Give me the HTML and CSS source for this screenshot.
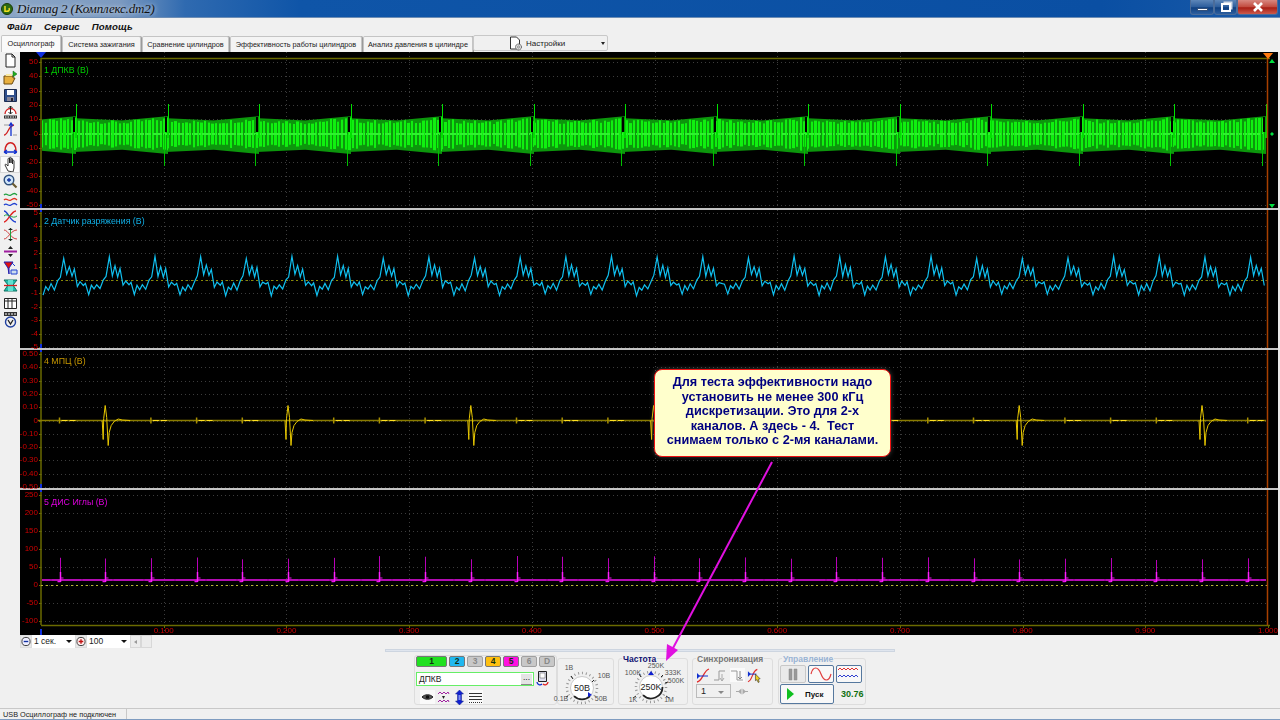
FILE: index.html
```html
<!DOCTYPE html>
<html>
    <head>
        <title>Diamag 2</title>
        <meta charset="utf-8">
        <link rel="stylesheet" href="styles.css">
    </head>

    <body>
        <div id="titlebar">
            <svg class="app_icon" width="12" height="12" viewBox="0 0 12 12">
                <circle cx="6" cy="6" r="5.5" fill="#2c6b12" stroke="#1b3a0a"/>
                <path d="M4 3v6M4 8c4 1 5-1 4-3" fill="none" stroke="#f0e020" stroke-width="1.5"/>
            </svg>
            <span class="app_title">Diamag 2 (Комплекс.dm2)</span>
            <div class="win_buttons">
                <div class="win_btn win_min"><span></span></div>
                <div class="win_btn win_max"><span></span></div>
                <div class="win_btn win_close">
                    <svg width="14" height="12" viewBox="0 0 14 12"><path d="M3 2l8 8M11 2l-8 8" stroke="#fff" stroke-width="2.6"/></svg>
                </div>
            </div>
        </div>

        <div id="menubar">
            <span class="menu_item">Файл</span>
            <span class="menu_item">Сервис</span>
            <span class="menu_item">Помощь</span>
        </div>

        <div id="tabbar">
            <div class="tab tab_active tab1">Осциллограф</div>
            <div class="tab tab2">Система зажигания</div>
            <div class="tab tab3">Сравнение цилиндров</div>
            <div class="tab tab4">Эффективность работы цилиндров</div>
            <div class="tab tab5">Анализ давления в цилиндре</div>
            <div class="settings">
                <svg width="14" height="15" viewBox="0 0 14 15">
                    <path d="M1.5 1h6l3 3v9h-9z" fill="#fff" stroke="#333"/>
                    <circle cx="9.5" cy="11" r="3" fill="#ddd" stroke="#555" stroke-dasharray="1.5 .6"/>
                    <circle cx="9.5" cy="11" r="1" fill="#fff" stroke="#555" stroke-width=".6"/>
                </svg>
                <span class="settings_text">Настройки</span>
                <span class="settings_arrow"></span>
            </div>
        </div>

        <div id="main">
            <div id="toolbar">
                <div class="tool"><svg width="15" height="15" viewBox="0 0 15 15"><path d="M3 1h6l3 3v10H3z" fill="#fff" stroke="#222"/><path d="M9 1v3h3" fill="none" stroke="#222"/></svg></div>
                <div class="tool"><svg width="15" height="15" viewBox="0 0 15 15"><path d="M1 6h9v2h2l-3 6H1z" fill="#e8b040" stroke="#6a4a10"/><path d="M10 1l4 3-4 3z" fill="#20b020" stroke="#106010" stroke-width=".5"/><path d="M3 4h6v2H3z" fill="#f8e8a0"/></svg></div>
                <div class="tool"><svg width="15" height="15" viewBox="0 0 15 15"><path d="M1.500 1.500h12v12h-12z" fill="#30508c" stroke="#1c2c50"/><path d="M4 2h7v5H4z" fill="#fff"/><path d="M4 9h7v4H4z" fill="#889"/><path d="M8 10h2v3H8z" fill="#223"/></svg></div>
                <div class="tool"><svg width="15" height="15" viewBox="0 0 15 15"><path d="M2 9a5.500 5.500 0 1 1 11 0" fill="#fff" stroke="#d02020" stroke-width="1.300"/><path d="M7.500 1v8M5.500 3l2-2 2 2M5.500 7l2 2 2-2" fill="none" stroke="#222"/><path d="M1 10.500h13v3H1z" fill="#333"/><path d="M2 12h11" stroke="#fff" stroke-dasharray="1.500 1"/></svg></div>
                <div class="tool"><svg width="15" height="15" viewBox="0 0 15 15"><path d="M1 13c4 0 4-9 10-10" fill="none" stroke="#d02020" stroke-width="1.300"/><path d="M8 1v13M6 4l2-3 2 3" fill="none" stroke="#1030d0" stroke-width="1.300"/><path d="M1 3h5M10 13h4" stroke="#999"/></svg></div>
                <div class="tool"><svg width="15" height="15" viewBox="0 0 15 15"><path d="M2 12C2 1 13 1 13 12" fill="none" stroke="#d02020" stroke-width="1.500"/><path d="M1 13h13M1 13l3-2M1 13l3 2M14 13l-3-2M14 13l-3 2" fill="none" stroke="#1030d0" stroke-width="1.300"/></svg></div>
                <div class="tool tool_active"><svg width="15" height="16" viewBox="0 0 15 16"><path d="M5 15L2 9c0-1 1-1 2 0l1 1V3c0-1 1.500-1 1.500 0v4-5c0-1 1.500-1 1.500 0v5-4c0-1 1.500-1 1.500 0v5-3c0-1 1.500-1 1.500 0v7l-1 4z" fill="#fff" stroke="#222" stroke-width=".9"/></svg></div>
                <div class="tool"><svg width="15" height="15" viewBox="0 0 15 15"><circle cx="6" cy="6" r="4.800" fill="#cfe4f8" stroke="#30507c" stroke-width="1.400"/><path d="M4 6h4M6 4v4" stroke="#1030a0" stroke-width="1.300"/><path d="M9.500 9.500l4 4" stroke="#6a5a30" stroke-width="2.200"/></svg></div>
                <div class="tool tool_gap"><svg width="15" height="16" viewBox="0 0 15 16"><path d="M1 3c3-3 4 2 7 0s4-2 6 0" fill="none" stroke="#20a040" stroke-width="1.300"/><path d="M1 8c3-3 4 2 7 0s4-2 6 0" fill="none" stroke="#e03020" stroke-width="1.300"/><path d="M1 13c3-3 4 2 7 0s4-2 6 0" fill="none" stroke="#2040d0" stroke-width="1.300"/></svg></div>
                <div class="tool"><svg width="15" height="15" viewBox="0 0 15 15"><path d="M1 2c4 0 6 11 12 11" fill="none" stroke="#2040d0" stroke-width="1.300"/><path d="M1 13C5 13 8 2 13 2" fill="none" stroke="#e02020" stroke-width="1.300"/><path d="M1 7c4-4 8 4 13 0" fill="none" stroke="#20a040"/></svg></div>
                <div class="tool"><svg width="15" height="15" viewBox="0 0 15 15"><path d="M1 12C5 12 8 3 14 3M1 3c4 0 7 9 13 9" fill="none" stroke="#d04040"/><path d="M7.500 1v13" stroke="#20a040"/><path d="M5 3l2.500-2L10 3zM5 12l2.500 2 2.500-2z" fill="#222"/></svg></div>
                <div class="tool"><svg width="15" height="15" viewBox="0 0 15 15"><path d="M5 5l2.500-3L10 5zM5 10l2.500 3L10 10z" fill="#222"/><path d="M1 7.500h13" stroke="#a020a0" stroke-width="2"/></svg></div>
                <div class="tool"><svg width="15" height="15" viewBox="0 0 15 15"><path d="M1 1h9L6 7v6L5 7z" fill="#e01010" stroke="#2020b0"/><path d="M8 9h6v4H8z" fill="#cde" stroke="#2040d0"/><path d="M9 2l3 3" stroke="#2040d0"/></svg></div>
                <div class="tool"><svg width="15" height="15" viewBox="0 0 15 15"><path d="M1 2h13l-4 5 4 6H1l4-6z" fill="#20c0b0" stroke="#107060"/><path d="M5 2h5v11H5z" fill="#60e0d0"/><path d="M1 7.500h13" stroke="#d02020" stroke-width="1.300"/></svg></div>
                <div class="tool"><svg width="15" height="15" viewBox="0 0 15 15"><path d="M1.500 2.500h12v10h-12z" fill="#fff" stroke="#222"/><path d="M1 5h13M5 3v10M9 3v10" stroke="#222"/></svg></div>
                <div class="tool"><svg width="15" height="16" viewBox="0 0 15 16"><path d="M1 0h13v4H1z" fill="#333"/><path d="M2 2h11" stroke="#fff" stroke-dasharray="2 1"/><circle cx="7.500" cy="10" r="5" fill="#f0f0f0" stroke="#2040a0" stroke-width="1.400"/><path d="M5 8l2.500 4L10 8" fill="none" stroke="#222" stroke-width="1.300"/></svg></div>
            </div>

            <div id="plots">
                <div class="plot plot1" data-plot="0"><canvas></canvas><span class="plot_name name1">1 ДПКВ (В)</span></div>
                <div class="plot plot2" data-plot="1"><canvas></canvas><span class="plot_name name2">2 Датчик разряжения (В)</span></div>
                <div class="plot plot3" data-plot="2"><canvas></canvas><span class="plot_name name3">4 МПЦ (В)</span></div>
                <div class="plot plot4" data-plot="3"><canvas></canvas><span class="plot_name name4">5 ДИС Иглы (В)</span></div>
            </div>
        </div>

        <div id="scrollrow">
            <div class="zoom_btn"><svg width="11" height="11" viewBox="0 0 11 11"><circle cx="5.500" cy="5.500" r="4.500" fill="#eef" stroke="#333"/><path d="M3 5.500h5" stroke="#1030a0" stroke-width="1.500"/></svg></div>
            <div class="combo combo_time">1 сек.<span class="combo_arrow"></span></div>
            <div class="zoom_btn"><svg width="11" height="11" viewBox="0 0 11 11"><circle cx="5.500" cy="5.500" r="4.500" fill="#fee" stroke="#333"/><path d="M3 5.500h5M5.500 3v5" stroke="#c01010" stroke-width="1.500"/></svg></div>
            <div class="combo combo_scale">100<span class="combo_arrow"></span></div>
            <div class="scroll_btn"><span class="scroll_left"></span></div>
            <div class="scroll_btn"></div>
        </div>

        <div id="splitter"><span></span></div>

        <div id="controls">
            <div class="group group_channels">
                <div class="channel_row">
                    <div class="chan chan_wide chan_green">1</div>
                    <div class="chan chan_cyan">2</div>
                    <div class="chan chan_off">3</div>
                    <div class="chan chan_orange">4</div>
                    <div class="chan chan_magenta">5</div>
                    <div class="chan chan_off">6</div>
                    <div class="chan chan_off">D</div>
                </div>
                <div class="input_row">
                    <div class="name_input">ДПКВ<span class="dots">...</span></div>
                    <svg width="13" height="15" viewBox="0 0 13 15"><path d="M2.500 .5h8v10h-8z" fill="#dde" stroke="#222"/><path d="M4 2h5v5H4z" fill="#fff" stroke="#555" stroke-width=".5"/><path d="M1 11a3 3 0 0 0 5 2" fill="none" stroke="#1030d0" stroke-width="1.300"/><path d="M12 11a3 3 0 0 1-5 2" fill="none" stroke="#e02020" stroke-width="1.300"/></svg>
                </div>
                <div class="icon_row">
                    <div class="small_icon icon_on"><svg width="13" height="13" viewBox="0 0 13 13"><path d="M1 6c3-3 8-3 11 0-3 3-8 3-11 0z" fill="#555" stroke="#222"/><circle cx="6.500" cy="6" r="1.800" fill="#111"/></svg></div>
                    <div class="small_icon"><svg width="13" height="13" viewBox="0 0 13 13"><path d="M1 3l2-2 2 2 2-2 2 2 2-2 1 2" fill="none" stroke="#a020a0"/><path d="M1 11l2-2 2 2 2-2 2 2 2-2 1 2" fill="none" stroke="#a020a0"/><path d="M5 5h3L6.500 8z" fill="#222"/></svg></div>
                    <div class="small_icon"><svg width="13" height="15" viewBox="0 0 13 15"><path d="M6.500 0l4 4H8.500v7h2l-4 4-4-4h2V4h-2z" fill="#1020d0" stroke="#102080" stroke-width=".5"/><path d="M5.500 5h2v5h-2z" fill="#8090f0"/></svg></div>
                    <div class="small_icon icon_on"><svg width="13" height="13" viewBox="0 0 13 13"><path d="M0 2.500h13M0 5.500h13M0 8.500h13" stroke="#333"/><path d="M0 11.500h13" stroke="#333" stroke-dasharray="1 1"/></svg></div>
                </div>
            </div>

            <div class="group group_volts">
                <svg class="knob" width="56" height="48" viewBox="0 0 56 48">
                    <circle cx="24" cy="32" r="15" fill="none" stroke="#999" stroke-width="2.500" stroke-dasharray="1 2.900"/>
                    <circle cx="24" cy="32" r="11.500" fill="#fff" stroke="#aaa" stroke-width=".6"/>
                    <path d="M16 40.200A11.500 11.500 0 0 0 32 40.200" fill="none" stroke="#222" stroke-width="1.800"/>
                    <path d="M30 36l4 3-4 2z" fill="#1020d0"/>
                    <path d="M13 20l2 3M36 24l-2 2M8 41l2-1" stroke="#222"/>
                    <text x="24" y="35" class="knob_value">50В</text>
                    <text x="11" y="14" class="knob_label">1В</text>
                    <text x="46" y="22" class="knob_label">10В</text>
                    <text x="3" y="45" class="knob_label">0.1В</text>
                    <text x="43" y="45" class="knob_label">50В</text>
                </svg>
            </div>

            <div class="group group_freq">
                <div class="group_title title_navy">Частота</div>
                <svg class="knob knob_freq" width="70" height="46" viewBox="0 0 70 46">
                    <circle cx="32" cy="29" r="15" fill="none" stroke="#999" stroke-width="2.500" stroke-dasharray="1 2.900"/>
                    <circle cx="32" cy="29" r="11.500" fill="#fff" stroke="#aaa" stroke-width=".6"/>
                    <path d="M24 37.200A11.500 11.500 0 0 0 43.500 29" fill="none" stroke="#222" stroke-width="1.800"/>
                    <path d="M32 13l3 4h-6z" fill="#1020d0"/>
                    <path d="M20 16l2 3M44 17l-2 2M49 24l-3 1M14 40l3-2M50 40l-3-2" stroke="#222"/>
                    <text x="32" y="32" class="knob_value">250K</text>
                    <text x="14" y="17" class="knob_label">100K</text>
                    <text x="37" y="10" class="knob_label">250K</text>
                    <text x="54" y="17" class="knob_label">333K</text>
                    <text x="57" y="25" class="knob_label">500K</text>
                    <text x="14" y="44" class="knob_label">1K</text>
                    <text x="50" y="44" class="knob_label">1M</text>
                </svg>
            </div>

            <div class="group group_sync">
                <div class="group_title title_grey">Синхронизация</div>
                <div class="sync_icons">
                    <div class="small_icon"><svg width="15" height="15" viewBox="0 0 15 15"><path d="M1 14C7 13 7 3 13 1" fill="none" stroke="#e03030" stroke-width="1.300"/><path d="M1 8h11" stroke="#1030d0"/><path d="M1 5v6l3-3z" fill="#1030d0"/></svg></div>
                    <div class="small_icon"><svg width="15" height="15" viewBox="0 0 15 15"><path d="M1 12h5V3h6" fill="none" stroke="#999"/><path d="M9 6v7M7 10l2 3 2-3" fill="none" stroke="#aaa"/></svg></div>
                    <div class="small_icon icon_on"><svg width="15" height="15" viewBox="0 0 15 15"><path d="M1 3h6v9h6" fill="none" stroke="#999"/><path d="M10 3v8M8 9l2 2 2-2" fill="none" stroke="#888"/></svg></div>
                    <div class="small_icon"><svg width="16" height="15" viewBox="0 0 16 15"><path d="M1 14C6 13 5 3 11 1" fill="none" stroke="#e03030" stroke-width="1.300"/><path d="M1 6h9" stroke="#1030d0"/><path d="M1 3v6l3-3z" fill="#1030d0"/><path d="M9 6l5 5-2 .5 1 3-1 .5-1.500-3L9 13z" fill="#f0d020" stroke="#222" stroke-width=".6"/></svg></div>
                </div>
                <div class="sync_row">
                    <div class="combo_small">1<span class="combo_arrow arrow_grey"></span></div>
                    <svg width="12" height="7" viewBox="0 0 12 7"><path d="M0 3.500h3M12 3.500H9" stroke="#aaa"/><path d="M5.500 .5v6L2 3.500zM6.500 .5v6l3.500-3z" fill="#aaa"/></svg>
                </div>
            </div>

            <div class="group group_run">
                <div class="group_title title_blue">Управление</div>
                <div class="run_row">
                    <div class="run_btn run_off"><svg width="12" height="13" viewBox="0 0 12 13"><path d="M2 1h3v11H2zM7 1h3v11H7z" fill="#999" stroke="#888" stroke-width=".5"/></svg></div>
                    <div class="run_btn"><svg width="22" height="14" viewBox="0 0 22 14"><path d="M1 7c2-8 7-8 10 0s8 8 10 0" fill="none" stroke="#e04040" stroke-width="1.200"/></svg></div>
                    <div class="run_btn"><svg width="22" height="14" viewBox="0 0 22 14"><path d="M0 3l2-2 2 2 2-2 2 2 2-2 2 2 2-2 2 2 2-2 2 2" fill="none" stroke="#e03030"/><path d="M0 10l2-2 2 2 2-2 2 2 2-2 2 2 2-2 2 2 2-2 2 2" fill="none" stroke="#3040d0"/></svg></div>
                </div>
                <div class="run_row">
                    <div class="start_btn"><span class="start_tri"></span><span class="start_text">Пуск</span></div>
                    <span class="fps">30.76</span>
                </div>
            </div>
        </div>

        <div id="statusbar">
            <div class="status_text">USB Осциллограф не подключен</div>
        </div>
        <div id="bottomedge"></div>

        <div id="callout">Для теста эффективности надо<br>установить не менее 300 кГц<br>дискретизации. Это для 2-х<br>каналов. А здесь - 4.&nbsp; Тест<br>снимаем только с 2-мя каналами.</div>

        <svg id="arrow" width="1280" height="720" viewBox="0 0 1280 720">
            <path d="M772 462L672 650" stroke="#e010e0" stroke-width="2" fill="none"/>
            <path d="M666 661l1-17 11 6z" fill="#e010e0"/>
        </svg>

        <script src="script.js"></script>
    </body>
</html>
```
FILE: styles.css
```css
html, body
{
    margin:0;
    padding:0;
    height:100%;
    overflow:hidden;
}

body
{
    width:1280px;
    height:720px;
    position:relative;
    display:flex;
    flex-direction:column;
    background-color:#f0f0f0;
    font-family:"Liberation Sans", Arial, sans-serif;
    font-size:7.3px;
    color:#222222;
}

#titlebar
{
    height:18px;
    flex:none;
    display:flex;
    align-items:center;
    padding-left:1px;
    background:linear-gradient(90deg, #8ba6c6 0px, #7c9ac0 120px, #2f6ab0 185px, #0f55a8 300px, #0a4fa3 1100px, #1a5aa8 1280px);
    border-bottom:1px solid #6d8db4;
    box-sizing:border-box;
}

.app_icon
{
    flex:none;
}

.app_title
{
    margin-left:4px;
    font-family:"Liberation Serif", serif;
    font-style:italic;
    font-size:13px;
    letter-spacing:-0.15px;
    color:#111111;
    text-shadow:0 0 4px #dfe8f2;
}

.win_buttons
{
    margin-left:auto;
    margin-right:2px;
    height:15px;
    align-self:flex-start;
    display:flex;
}

.win_btn
{
    display:flex;
    align-items:center;
    justify-content:center;
    box-sizing:border-box;
    border:1px solid #4b6c99;
    border-top:none;
    border-radius:0 0 3px 3px;
    background:linear-gradient(#5d86b8, #2c5d9c 50%, #0e3f80 55%, #2d5f9f);
}

.win_min
{
    width:24px;
}

.win_min span
{
    width:11px;
    height:3px;
    margin-top:5px;
    background-color:#ffffff;
    border:1px solid #33507a;
    box-sizing:border-box;
}

.win_max
{
    width:23px;
}

.win_max span
{
    width:10px;
    height:9px;
    border:2px solid #ffffff;
    box-sizing:border-box;
    box-shadow:2px -2px 0 -0.5px #cfd9e6;
}

.win_close
{
    width:41px;
    background:linear-gradient(#d88880, #c24a3e 50%, #a81e14 55%, #cc5a4c);
}

#menubar
{
    height:17px;
    flex:none;
    display:flex;
    align-items:center;
    gap:12px;
    padding-left:7px;
    box-sizing:border-box;
}

.menu_item
{
    font-size:9.6px;
    font-weight:bold;
    font-style:italic;
    color:#111111;
    letter-spacing:0.1px;
}

#tabbar
{
    height:17px;
    flex:none;
    display:flex;
    padding-left:1px;
    box-sizing:border-box;
}

.tab
{
    box-sizing:border-box;
    height:16px;
    margin-top:1px;
    margin-right:1px;
    text-align:center;
    line-height:15px;
    background-color:#f4f4f4;
    border:1px solid #c4c4c4;
    border-bottom:none;
    border-radius:2px 2px 0 0;
    white-space:nowrap;
    box-shadow:1px 0 0 #9a9a9a;
}

.tab_active
{
    height:17px;
    margin-top:0;
    background-color:#fafafa;
}

.tab1
{
    width:60px;
}

.tab2
{
    width:79px;
}

.tab3
{
    width:87px;
}

.tab4
{
    width:132px;
}

.tab5
{
    width:110px;
}

.settings
{
    width:135px;
    height:16px;
    box-sizing:border-box;
    margin-left:-1px;
    display:flex;
    align-items:center;
    padding-left:35px;
    background-color:#f0f0f0;
    border:1px solid #c8c8c8;
    border-radius:2px;
}

.settings_text
{
    margin-left:3px;
    font-size:8px;
}

.settings_arrow
{
    margin-left:auto;
    margin-right:2px;
    border-left:2.5px solid transparent;
    border-right:2.5px solid transparent;
    border-top:3px solid #222222;
}

#main
{
    height:583px;
    flex:none;
    display:flex;
}

#toolbar
{
    width:20px;
    flex:none;
    display:flex;
    flex-direction:column;
    box-sizing:border-box;
}

.tool
{
    height:17.25px;
    flex:none;
    display:flex;
    align-items:center;
    justify-content:center;
}

.tool_active
{
    background-color:#fbfbfb;
    box-shadow:inset 0 0 0 1px #d8d8d8;
}

.tool_gap
{
    margin-top:1px;
}

#plots
{
    flex:1;
    display:flex;
    flex-direction:column;
    border-right:2px solid #e8e8e8;
    background-color:#000000;
}

.plot
{
    position:relative;
    overflow:hidden;
    background-color:#000000;
    flex:none;
}

.plot canvas
{
    display:block;
}

.plot1
{
    height:158px;
}

.plot2, .plot3
{
    height:140px;
}

.plot4
{
    height:145px;
}

.plot_name
{
    position:absolute;
    left:24px;
    font-size:8.8px;
    white-space:nowrap;
}

.name1
{
    top:13px;
    color:#00d000;
}

.name2
{
    top:6px;
    color:#10b0e8;
}

.name3
{
    top:6px;
    color:#c89800;
}

.name4
{
    top:7px;
    color:#e000e0;
}

.axis_label
{
    position:absolute;
    right:1240px;
    font-size:8px;
    line-height:8px;
    color:#d00000;
    white-space:nowrap;
}

.time_label
{
    position:absolute;
    top:137px;
    width:40px;
    margin-left:-20px;
    text-align:center;
    font-size:8px;
    line-height:8px;
    color:#d00000;
}

#scrollrow
{
    height:13px;
    flex:none;
    display:flex;
    align-items:center;
    margin-left:20px;
}

.zoom_btn
{
    width:12px;
    height:13px;
    display:flex;
    align-items:center;
    justify-content:center;
    background-color:#e8e8e8;
    box-sizing:border-box;
    border:1px solid #dddddd;
}

.combo
{
    height:13px;
    position:relative;
    box-sizing:border-box;
    padding-left:2px;
    font-size:8.5px;
    line-height:13px;
    background-color:#ffffff;
}

.combo_time
{
    width:43px;
}

.combo_scale
{
    width:43px;
}

.combo_arrow
{
    position:absolute;
    right:3px;
    top:5px;
    border-left:3px solid transparent;
    border-right:3px solid transparent;
    border-top:3px solid #111111;
}

.arrow_grey
{
    top:6px;
    right:6px;
    border-top-color:#888888;
}

.scroll_btn
{
    width:11px;
    height:13px;
    display:flex;
    align-items:center;
    justify-content:center;
    box-sizing:border-box;
    background-color:#ececec;
    border:1px solid #d8d8d8;
}

.scroll_left
{
    border-top:2.5px solid transparent;
    border-bottom:2.5px solid transparent;
    border-right:3px solid #999999;
}

#splitter
{
    height:3px;
    width:510px;
    flex:none;
    margin:1px 0 0 385px;
    background-color:#dfe5ee;
    border:1px solid #cdd5e0;
    box-sizing:border-box;
    display:flex;
    justify-content:center;
}

#controls
{
    height:55px;
    flex:none;
    box-sizing:border-box;
    display:flex;
    justify-content:center;
    padding-top:3px;
}

.group
{
    box-sizing:border-box;
    border:1px solid #dddddd;
    border-radius:3px;
    position:relative;
    height:50px;
}

.group_channels
{
    width:143px;
    padding:0 1px 0 1px;
}

.group_volts
{
    width:57px;
    margin-top:3px;
    height:47px;
}

.group_freq
{
    width:70px;
    margin-left:4px;
    margin-top:3px;
    height:47px;
}

.group_sync
{
    width:81px;
    margin-left:4px;
    margin-top:3px;
    height:47px;
    padding-left:3px;
}

.group_run
{
    width:88px;
    margin-left:5px;
    margin-top:3px;
    height:47px;
    padding-left:1px;
}

.group_title
{
    font-size:8.5px;
    font-weight:bold;
    line-height:9px;
    margin:-4px 0 0 3px;
    padding:0 1px;
    width:max-content;
    background-color:#f0f0f0;
}

.title_navy
{
    color:#101070;
}

.title_grey
{
    color:#777777;
    margin-left:0;
}

.title_blue
{
    color:#9ab4d4;
    margin-left:2px;
}

.channel_row
{
    display:flex;
    gap:2px;
}

.chan
{
    width:16px;
    height:11px;
    box-sizing:border-box;
    border:1px solid #777777;
    border-radius:2px;
    text-align:center;
    font-size:8.5px;
    font-weight:bold;
    line-height:9px;
    color:#103010;
}

.chan_wide
{
    width:31px;
}

.chan_green
{
    background-color:#20e020;
}

.chan_cyan
{
    background-color:#20b8f0;
}

.chan_orange
{
    background-color:#ffc010;
}

.chan_magenta
{
    background-color:#ff10e0;
}

.chan_off
{
    background-color:#c8c8c8;
    color:#888888;
    border-color:#a0a0a0;
}

.input_row
{
    display:flex;
    align-items:center;
    gap:2px;
    margin-top:4px;
}

.name_input
{
    width:118px;
    height:14px;
    position:relative;
    box-sizing:border-box;
    padding-left:2px;
    line-height:12px;
    font-size:8.5px;
    background-color:#ffffff;
    border:1px solid #66ee66;
}

.dots
{
    position:absolute;
    right:1px;
    top:1px;
    width:11px;
    height:10px;
    line-height:6px;
    text-align:center;
    background-color:#e4e4e4;
    border-bottom:1px solid #888888;
}

.icon_row
{
    display:flex;
    margin:4px 0 0 4px;
    gap:1px;
}

.small_icon
{
    width:15px;
    height:14px;
    display:flex;
    align-items:center;
    justify-content:center;
}

.icon_on
{
    background-color:#fafafa;
}

.knob_value
{
    font-family:"Liberation Sans", sans-serif;
    font-size:9px;
    text-anchor:middle;
    fill:#222222;
}

.knob_label
{
    font-family:"Liberation Sans", sans-serif;
    font-size:7px;
    text-anchor:middle;
    fill:#555555;
}

.knob
{
    display:block;
    position:absolute;
    left:0;
    bottom:0;
    overflow:visible;
}

.sync_icons
{
    display:flex;
    gap:2px;
    margin-top:4px;
}

.sync_row
{
    display:flex;
    align-items:center;
    gap:5px;
    margin-top:2px;
}

.combo_small
{
    width:35px;
    height:14px;
    position:relative;
    box-sizing:border-box;
    padding-left:4px;
    font-size:9px;
    line-height:12px;
    background-color:#f0f0f0;
    border:1px solid #bbbbbb;
}

.run_row
{
    display:flex;
    gap:2px;
    margin-top:1px;
    align-items:center;
}

.run_btn
{
    width:26px;
    height:18px;
    box-sizing:border-box;
    display:flex;
    align-items:center;
    justify-content:center;
    background-color:#f8f8f8;
    border:1px solid #56789e;
    border-radius:2px;
}

.run_off
{
    background-color:#eaeaea;
    border-color:#c8c8c8;
}

.start_btn
{
    width:54px;
    height:20px;
    box-sizing:border-box;
    display:flex;
    align-items:center;
    padding-left:6px;
    background-color:#f8f8f8;
    border:1px solid #56789e;
    border-radius:2px;
}

.start_tri
{
    border-top:6px solid transparent;
    border-bottom:6px solid transparent;
    border-left:7px solid #10c020;
}

.start_text
{
    margin-left:11px;
    font-size:8px;
    font-weight:bold;
    color:#111111;
}

.fps
{
    margin-left:5px;
    font-size:9px;
    font-weight:bold;
    color:#107010;
}

#statusbar
{
    height:11px;
    flex:none;
    box-sizing:border-box;
    border-top:1px solid #c8c8c8;
    margin-top:1px;
    display:flex;
}

.status_text
{
    width:127px;
    box-sizing:border-box;
    padding-left:3px;
    line-height:11px;
    border-right:1px solid #c8c8c8;
    white-space:nowrap;
    overflow:hidden;
}

#bottomedge
{
    flex:1;
    background-color:#7f9cc0;
}

#callout
{
    position:absolute;
    left:654px;
    top:369px;
    width:237px;
    height:88px;
    box-sizing:border-box;
    padding-top:5px;
    text-align:center;
    font-size:12.7px;
    font-weight:bold;
    line-height:14.6px;
    color:#000080;
    background-color:#ffffcc;
    border:1px solid #ee1111;
    border-radius:8px;
    box-shadow:0 0 5px rgba(120,120,120,0.5);
}

#arrow
{
    position:absolute;
    left:0;
    top:0;
    pointer-events:none;
}
```
FILE: script.js
```js
// plot geometry, all y values are page coordinates
var plots=[
    {top:52,h:158,y0:62,dy:14.3,labels:["50","40","30","20","10","0","-10","-20","-30","-40","-50"]},
    {top:210,h:140,y0:213,dy:13.4,labels:["5","4","3","2","1","0","-1","-2","-3","-4","-5"]},
    {top:350,h:140,y0:354,dy:13.3,labels:["0.50","0.40","0.30","0.20","0.10","0","-0.10","-0.20","-0.30","-0.40","-0.50"]},
    {top:490,h:145,y0:495,dy:18,labels:["250","200","150","100","50","0","-50","-100"]}
];

var axisx=41;
var endx=1268;
var gridx=122.7;

function rnd(i)
{
    var s=Math.sin(i*12.9898)*43758.5453;
    return s-Math.floor(s);
}

function line(ctx,x1,y1,x2,y2,color,width)
{
    ctx.strokeStyle=color;
    ctx.lineWidth=width||1;
    ctx.beginPath();
    ctx.moveTo(x1,y1);
    ctx.lineTo(x2,y2);
    ctx.stroke();
}

function frame(ctx,p,i)
{
    var bottom=p.top+p.h-2;

    ctx.setLineDash([1,3]);
    for (var k=0;k<p.labels.length;k++)
    {
        var y=Math.round(p.y0+k*p.dy)+0.5;
        line(ctx,axisx,y,endx,y,"#3c3c3c");
    }
    for (var t=1;t<=9;t++)
    {
        var x=Math.round(axisx+t*gridx)+0.5;
        line(ctx,x,p.top,x,bottom,"#3c3c3c");
    }
    ctx.setLineDash([]);

    var axistop=i==0?58:p.top;
    var axisbottom=i==3?625:bottom;
    line(ctx,axisx,axistop,axisx,axisbottom,"#6a6a00",1.5);

    for (k=0;k<p.labels.length;k++)
    {
        y=Math.round(p.y0+k*p.dy)+0.5;
        line(ctx,axisx-2,y,axisx,y,"#6a6a00");
    }

    if (i==0)
    {
        line(ctx,axisx,58.5,1270,58.5,"#6a6a00",1.5);
        ctx.fillStyle="#1030e0";
        ctx.beginPath();
        ctx.moveTo(36,52);
        ctx.lineTo(46,52);
        ctx.lineTo(41,58);
        ctx.fill();
    }
    if (i==3)
    {
        line(ctx,axisx,625.5,1270,625.5,"#6a6a00",1.5);
        for (t=1;t<=10;t++)
        {
            x=Math.round(axisx+t*gridx)+0.5;
            line(ctx,x,625,x,628,"#6a6a00");
        }
    }

    ctx.fillStyle="#1030e0";
    ctx.fillRect(axisx-1,bottom-4,2,6);
    ctx.fillRect(axisx-1,p.top,2,2);
}

function cursor(ctx,p,i)
{
    var top=i==0?58:p.top;
    var bottom=i==3?625:p.top+p.h-2;
    line(ctx,1267.5,top,1267.5,bottom,"#a84000",1.5);
    if (i==0)
    {
        ctx.fillStyle="#ff7a10";
        ctx.beginPath();
        ctx.moveTo(1263,53);
        ctx.lineTo(1273,53);
        ctx.lineTo(1268,59);
        ctx.fill();
        ctx.fillStyle="#00e040";
        ctx.beginPath();
        ctx.moveTo(1269,63);
        ctx.lineTo(1275,63);
        ctx.lineTo(1272,59);
        ctx.fill();
        ctx.beginPath();
        ctx.moveTo(1270,134);
        ctx.lineTo(1272,132);
        ctx.lineTo(1274,134);
        ctx.lineTo(1272,136);
        ctx.fill();
        ctx.beginPath();
        ctx.moveTo(1269,204);
        ctx.lineTo(1275,204);
        ctx.lineTo(1272,208);
        ctx.fill();
    }
}

function wave1(ctx)
{
    var y0=134;
    var u=1.43;
    for (var x=axisx+1;x<1266;x++)
    {
        var p=(x-76)/91.5;
        p=p-Math.floor(p);
        var a=p<0.5?11-p*3:9.5+(p-0.5)*6;
        var low=a+1.5;
        ctx.fillStyle="#0c960c";
        ctx.fillRect(x,y0-a*u,1,(a+low)*u);
        var n=Math.floor(x/3.7);
        if (x/3.7-n<0.62)
        {
            var b=a*(0.7+0.27*rnd(n));
            ctx.fillStyle="#10f010";
            ctx.fillRect(x,y0-b*u,1,(2*b)*u);
        }
        if (rnd(x)>0.25)
        {
            ctx.fillStyle="#30f030";
            ctx.fillRect(x,y0-1,1,2);
        }
    }
    for (var k=-1;k<14;k++)
    {
        var sx=Math.round(76+91.5*k);
        if (sx<44)
        {
            continue;
        }
        ctx.fillStyle="#000000";
        ctx.fillRect(sx-3,y0-17,2,15);
        ctx.fillStyle="#00c000";
        ctx.fillRect(sx-4,y0,1,32);
        ctx.fillStyle="#00e000";
        ctx.fillRect(sx,y0-30,1,34);
        ctx.fillRect(sx-1,y0-2,1,6);
    }
}

function wave2(ctx)
{
    var y0=280;
    var u=13.4;
    var shape=[[0,158],[9,212],[17,183],[25,215],[32,192],[41,245],[49,232],[59,240],[65,235],[75,270],[83,245],[91,255],[99,238],[109,255],[119,228],[127,215]];
    ctx.strokeStyle="#10c0f0";
    ctx.lineWidth=1.2;
    ctx.beginPath();
    var first=true;
    for (var k=-1;k<27;k++)
    {
        for (var j=0;j<shape.length;j++)
        {
            var x=63.7+k*45.65+shape[j][0]/3;
            var v=(226-shape[j][1])/40+(rnd(k*31+j)-0.5)*0.18;
            if (x<axisx+1||x>1266)
            {
                continue;
            }
            if (first)
            {
                ctx.moveTo(x,y0-v*u);
                first=false;
            }
            else
            {
                ctx.lineTo(x,y0-v*u);
            }
        }
    }
    ctx.stroke();
}

function wave3(ctx)
{
    var y0=420.5;
    line(ctx,38,y0,1266,y0,"#8a7c00",1.5);
    for (var k=0;k<27;k++)
    {
        var x=59.5+k*45.7;
        if (k%4==1)
        {
            // the big ignition pulse, one in four
            ctx.strokeStyle="#e8c800";
            ctx.lineWidth=1;
            ctx.beginPath();
            ctx.moveTo(x-3,y0);
            ctx.lineTo(x-2,y0+19);
            ctx.lineTo(x-1.5,y0-2);
            ctx.lineTo(x,y0-15);
            ctx.lineTo(x+1.5,y0-3);
            ctx.lineTo(x+3,y0+25);
            ctx.lineTo(x+4,y0+12);
            ctx.lineTo(x+6,y0+5);
            ctx.lineTo(x+9,y0+1);
            ctx.lineTo(x+13,y0-1.5);
            ctx.lineTo(x+17,y0-0.5);
            ctx.lineTo(x+25,y0);
            ctx.stroke();
            continue;
        }
        line(ctx,x,y0-3,x,y0+3,"#a89000",1.5);
        if (x<1250)
        {
            line(ctx,x+2,y0,x+8,y0,"#ffe020",1);
            line(ctx,x+10,y0,x+16,y0,"#ffe020",1);
        }
    }
}

function wave4(ctx)
{
    var y0=580;
    line(ctx,axisx+1,y0,1266,y0,"#ee10ee",1.5);
    for (var k=0;k<27;k++)
    {
        var x=Math.round(59.5+k*45.7)+0.5;
        var h=20+rnd(k+3)*4;
        line(ctx,x,y0-h,x,y0-8,"#b800b8",1);
        line(ctx,x,y0-8,x,y0+2,"#ff20ff",1.5);
        line(ctx,x-3,y0+1.5,x,y0+1.5,"#ee10ee",1.5);
        line(ctx,x,y0-2,x+3,y0-2,"#ee10ee",1);
    }
    for (var j=0;j<40;j++)
    {
        line(ctx,50+j*31,y0,52+j*31,y0,"#900090",1);
    }
}

function zeroline(ctx,y,color)
{
    ctx.setLineDash([2,3]);
    line(ctx,axisx,y,endx,y,color);
    ctx.setLineDash([]);
}

var boxes=document.querySelectorAll(".plot");

for (var i=0;i<plots.length;i++)
{
    var p=plots[i];
    var box=boxes[i];
    var canvas=box.querySelector("canvas");
    canvas.width=1258;
    canvas.height=p.h;
    var ctx=canvas.getContext("2d");
    ctx.translate(-20,-p.top);

    frame(ctx,p,i);

    if (i==0) wave1(ctx);
    if (i==1)
    {
        zeroline(ctx,280.5,"#8a8a00");
        wave2(ctx);
    }
    if (i==2) wave3(ctx);
    if (i==3)
    {
        zeroline(ctx,585.5,"#b8b830");
        wave4(ctx);
    }

    cursor(ctx,p,i);

    if (i<3)
    {
        ctx.fillStyle="#c4c4c4";
        ctx.fillRect(20,p.top+p.h-2,1260,2);
    }

    for (var k=0;k<p.labels.length;k++)
    {
        var label=document.createElement("span");
        label.className="axis_label";
        label.textContent=p.labels[k];
        label.style.top=(p.y0+k*p.dy-4-p.top)+"px";
        box.appendChild(label);
    }

    if (i==3)
    {
        for (var t=1;t<=10;t++)
        {
            var time=document.createElement("span");
            time.className="time_label";
            time.textContent=(t/10).toFixed(3);
            time.style.left=(axisx+t*gridx-20)+"px";
            box.appendChild(time);
        }
    }
}
```
